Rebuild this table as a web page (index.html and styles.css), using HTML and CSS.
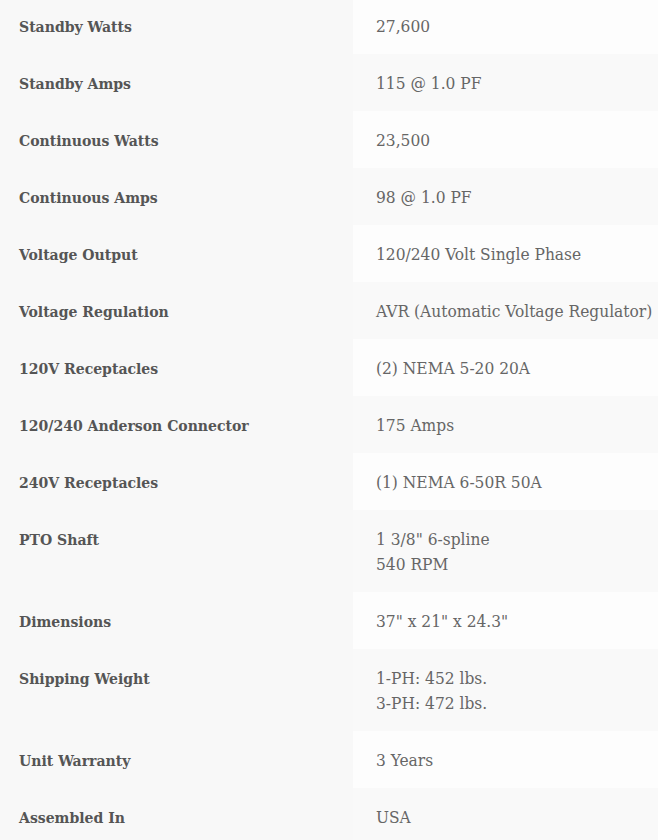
FILE: index.html
```html
<!DOCTYPE html>
<html>
<head>
<meta charset="utf-8">
<link rel="stylesheet" href="styles.css">
</head>
<body>
<table class="specs">
  <tbody>
    <tr><th>Standby Watts</th><td>27,600</td></tr>
    <tr><th>Standby Amps</th><td>115 @ 1.0 PF</td></tr>
    <tr><th>Continuous Watts</th><td>23,500</td></tr>
    <tr><th>Continuous Amps</th><td>98 @ 1.0 PF</td></tr>
    <tr><th>Voltage Output</th><td>120/240 Volt Single Phase</td></tr>
    <tr><th>Voltage Regulation</th><td>AVR (Automatic Voltage Regulator)</td></tr>
    <tr><th>120V Receptacles</th><td>(2) NEMA 5-20 20A</td></tr>
    <tr><th>120/240 Anderson Connector</th><td>175 Amps</td></tr>
    <tr><th>240V Receptacles</th><td>(1) NEMA 6-50R 50A</td></tr>
    <tr><th>PTO Shaft</th><td>1 3/8" 6-spline<br>540 RPM</td></tr>
    <tr><th>Dimensions</th><td>37" x 21" x 24.3"</td></tr>
    <tr><th>Shipping Weight</th><td>1-PH: 452 lbs.<br>3-PH: 472 lbs.</td></tr>
    <tr><th>Unit Warranty</th><td>3 Years</td></tr>
    <tr><th>Assembled In</th><td>USA</td></tr>
  </tbody>
</table>
</body>
</html>
```
FILE: styles.css
```css
html, body {
  margin: 0;
  padding: 0;
  background: #ffffff;
}
body {
  overflow: hidden;
}
.specs {
  width: 658px;
  margin-top: -3px;
  border-collapse: collapse;
  border-spacing: 0;
  table-layout: fixed;
  font-family: "DejaVu Serif Condensed", "DejaVu Serif", serif;
  font-stretch: condensed;
}
.specs th,
.specs td {
  vertical-align: top;
  text-align: left;
  padding: 17px 0 15px;
  line-height: 25px;
  white-space: nowrap;
}
.specs th {
  width: 334px;
  padding-left: 19px;
  background: #f8f8f8;
  font-weight: bold;
  font-size: 15.6px;
  color: #555555;
}
.specs td {
  padding-left: 23px;
  font-weight: normal;
  font-size: 17.2px;
  color: #666666;
  background: #fdfdfd;
}
.specs tr:nth-child(even) td {
  background: #f9f9f9;
}
```
